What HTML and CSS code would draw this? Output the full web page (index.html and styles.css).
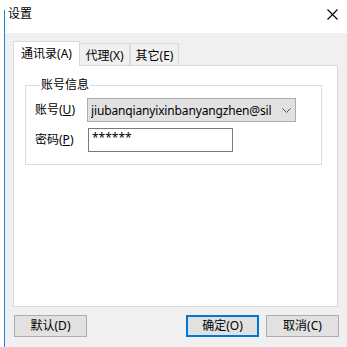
FILE: index.html
```html
<!DOCTYPE html>
<html>
<head>
<meta charset="utf-8">
<link rel="stylesheet" href="styles.css">
</head>
<body>
<div class="window">
  <div class="titlebar">
    <span class="title">设置</span>
    <svg class="close" width="11" height="11" viewBox="0 0 11 11"><path d="M0.5 0.5 L10.5 10.5 M10.5 0.5 L0.5 10.5" stroke="#000" stroke-width="1.1" fill="none"/></svg>
  </div>
  <div class="client">
    <div class="tabs">
      <div class="tab active">通讯录(A)</div>
      <div class="tab t2">代理(X)</div>
      <div class="tab t3">其它(E)</div>
    </div>
    <div class="panel">
      <fieldset class="group">
        <legend>账号信息</legend>
        <div class="row">
          <span class="label">账号(<u>U</u>)</span>
          <div class="combo">
            <span class="combo-text">jiubanqianyixinbanyangzhen@sil</span>
            <svg class="chev" width="9" height="5" viewBox="0 0 9 5"><path d="M0.5 0.5 L4.5 4.5 L8.5 0.5" stroke="#555" stroke-width="1" fill="none"/></svg>
          </div>
        </div>
        <div class="row">
          <span class="label">密码(<u>P</u>)</span>
          <div class="input">******</div>
        </div>
      </fieldset>
    </div>
    <div class="buttons">
      <div class="btn">默认(D)</div>
      <div class="spacer"></div>
      <div class="btn default">确定(O)</div>
      <div class="btn">取消(C)</div>
    </div>
  </div>
</div>
</body>
</html>
```
FILE: styles.css
```css
html, body {
  margin: 0;
  padding: 0;
}
body {
  width: 347px;
  height: 347px;
  overflow: hidden;
  background: #fff linear-gradient(#1a84d8, #1a84d8) 4px 10px / 1px 337px no-repeat;
  font-family: "Noto Sans", "Noto Sans CJK SC", sans-serif;
  font-size: 12px;
  color: #000;
}
u {
  text-decoration: underline;
  text-underline-offset: 1px;
}
.window {
  margin-left: 5px;
  width: 342px;
  height: 347px;
  display: flex;
  flex-direction: column;
}
.titlebar {
  height: 33px;
  background: #fff;
  display: flex;
  align-items: center;
  padding-left: 3px;
  padding-right: 9px;
}
.title {
  flex: 1;
  font-size: 12px;
  line-height: 14px;
  margin-top: -6px;
}
.close {
  margin-top: -5px;
}
.client {
  flex: 1;
  background: #f0f0f0;
  padding: 8px 9px 0 8px;
  display: flex;
  flex-direction: column;
}
.tabs {
  display: flex;
  align-items: flex-end;
  height: 24px;
  position: relative;
  z-index: 1;
}
.tab {
  box-sizing: border-box;
  height: 22px;
  border: 1px solid #d9d9d9;
  border-bottom: none;
  background: #f0f0f0;
  display: flex;
  align-items: center;
  justify-content: center;
  line-height: 14px;
  padding-top: 2px;
}
.tab + .tab {
  border-left: none;
}
.tab.active {
  width: 67px;
  height: 25px;
  background: #fff;
  margin-bottom: -1px;
  padding-top: 0;
}
.tab.t2 {
  width: 50px;
}
.tab.t3 {
  width: 49px;
  border-left: 1px solid #d9d9d9;
}
.panel {
  box-sizing: border-box;
  width: 325px;
  height: 242px;
  background: #fff;
  border: 1px solid #d9d9d9;
  padding: 12px 15px 0 11px;
}
.group {
  margin: 0;
  min-width: 0;
  box-sizing: border-box;
  width: 297px;
  height: 87px;
  border: 1px solid #dcdcdc;
  padding: 6px 0 0 9px;
}
.group legend {
  padding: 0 1px;
  margin-left: 5px;
  line-height: 14px;
}
.row {
  display: flex;
  align-items: center;
  height: 24px;
}
.row + .row {
  margin-top: 6px;
}
.label {
  width: 52px;
  line-height: 14px;
}
.combo {
  box-sizing: border-box;
  width: 209px;
  height: 24px;
  background: #e1e1e1;
  border: 1px solid #adadad;
  display: flex;
  align-items: center;
  padding: 0 4px 0 3px;
}
.combo-text {
  flex: 1;
  white-space: nowrap;
  overflow: hidden;
  font-size: 12px;
  letter-spacing: -0.15px;
}
.chev {
  margin-left: 4px;
}
.input {
  box-sizing: border-box;
  width: 145px;
  height: 24px;
  margin-left: 1px;
  background: #fff;
  border: 1px solid #7a7a7a;
  padding: 3px 0 0 3px;
  line-height: 12px;
  font-size: 12px;
}
.buttons {
  display: flex;
  margin-top: 8px;
  padding-left: 1px;
}
.spacer {
  flex: 1;
}
.btn {
  box-sizing: border-box;
  width: 73px;
  height: 22px;
  background: #e1e1e1;
  border: 1px solid #adadad;
  display: flex;
  align-items: center;
  justify-content: center;
  line-height: 14px;
}
.btn.default {
  border: 2px solid #0078d7;
  margin-right: 7px;
}
.btn:last-child {
  margin-right: -1px;
}
```
